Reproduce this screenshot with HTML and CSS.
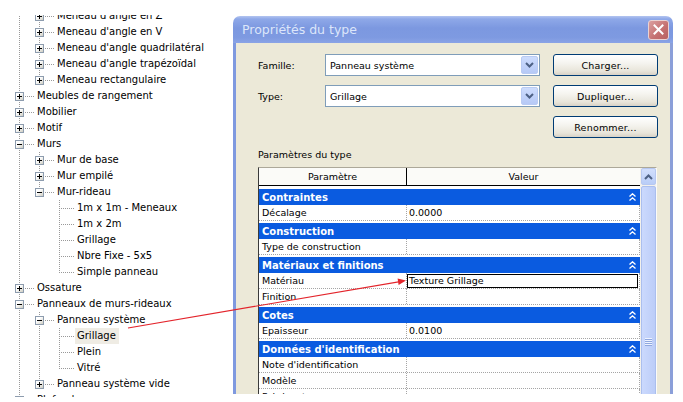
FILE: index.html
```html
<!DOCTYPE html>
<html lang="fr">
<head>
<meta charset="utf-8">
<title>Propriétés du type</title>
<link rel="stylesheet" href="styles.css">
</head>
<body>
<div class="stage">
  <div class="tree-pane">
    <div class="tree">
      <div class="row"><span class="c v"></span><span class="n full"><i class="bx plus"></i></span><span class="t">Meneau d'angle en Z</span></div>
      <div class="row"><span class="c v"></span><span class="n full"><i class="bx plus"></i></span><span class="t">Meneau d'angle en V</span></div>
      <div class="row"><span class="c v"></span><span class="n full"><i class="bx plus"></i></span><span class="t">Meneau d'angle quadrilatéral</span></div>
      <div class="row"><span class="c v"></span><span class="n full"><i class="bx plus"></i></span><span class="t">Meneau d'angle trapézoïdal</span></div>
      <div class="row"><span class="c v"></span><span class="n last"><i class="bx plus"></i></span><span class="t">Meneau rectangulaire</span></div>
      <div class="row"><span class="n full"><i class="bx plus"></i></span><span class="t">Meubles de rangement</span></div>
      <div class="row"><span class="n full"><i class="bx plus"></i></span><span class="t">Mobilier</span></div>
      <div class="row"><span class="n full"><i class="bx plus"></i></span><span class="t">Motif</span></div>
      <div class="row"><span class="n full"><i class="bx minus"></i></span><span class="t">Murs</span></div>
      <div class="row"><span class="c v"></span><span class="n full"><i class="bx plus"></i></span><span class="t">Mur de base</span></div>
      <div class="row"><span class="c v"></span><span class="n full"><i class="bx plus"></i></span><span class="t">Mur empilé</span></div>
      <div class="row"><span class="c v"></span><span class="n last"><i class="bx minus"></i></span><span class="t">Mur-rideau</span></div>
      <div class="row"><span class="c v"></span><span class="c"></span><span class="n full"></span><span class="t">1m x 1m - Meneaux</span></div>
      <div class="row"><span class="c v"></span><span class="c"></span><span class="n full"></span><span class="t">1m x 2m</span></div>
      <div class="row"><span class="c v"></span><span class="c"></span><span class="n full"></span><span class="t">Grillage</span></div>
      <div class="row"><span class="c v"></span><span class="c"></span><span class="n full"></span><span class="t">Nbre Fixe - 5x5</span></div>
      <div class="row"><span class="c v"></span><span class="c"></span><span class="n last"></span><span class="t">Simple panneau</span></div>
      <div class="row"><span class="n full"><i class="bx plus"></i></span><span class="t">Ossature</span></div>
      <div class="row"><span class="n full"><i class="bx minus"></i></span><span class="t">Panneaux de murs-rideaux</span></div>
      <div class="row"><span class="c v"></span><span class="n full"><i class="bx minus"></i></span><span class="t">Panneau système</span></div>
      <div class="row"><span class="c v"></span><span class="c v"></span><span class="n full"></span><span class="t sel">Grillage</span></div>
      <div class="row"><span class="c v"></span><span class="c v"></span><span class="n full"></span><span class="t">Plein</span></div>
      <div class="row"><span class="c v"></span><span class="c v"></span><span class="n last"></span><span class="t">Vitré</span></div>
      <div class="row"><span class="c v"></span><span class="n last"><i class="bx plus"></i></span><span class="t">Panneau système vide</span></div>
      <div class="row"><span class="n full"><i class="bx plus"></i></span><span class="t">Plafonds</span></div>
    </div>
  </div>

  <div class="dialog">
    <div class="titlebar">
      <span class="title">Propriétés du type</span>
      <span class="close"><svg width="11" height="11" viewBox="0 0 11 11"><path d="M1.5 1.5 L9.5 9.5 M9.5 1.5 L1.5 9.5" stroke="#fff" stroke-width="2" stroke-linecap="square"/></svg></span>
    </div>
    <div class="body">
      <div class="form">
        <span class="lbl">Famille:</span>
        <div class="combo"><span>Panneau système</span><span class="drop"><svg width="9" height="6" viewBox="0 0 9 6"><path d="M1 1 L4.5 4.5 L8 1" fill="none" stroke="#4d6185" stroke-width="2"/></svg></span></div>
        <div class="btn">Charger...</div>
        <span class="lbl">Type:</span>
        <div class="combo"><span>Grillage</span><span class="drop"><svg width="9" height="6" viewBox="0 0 9 6"><path d="M1 1 L4.5 4.5 L8 1" fill="none" stroke="#4d6185" stroke-width="2"/></svg></span></div>
        <div class="btn">Dupliquer...</div>
        <div class="btn col3">Renommer...</div>
      </div>
      <div class="section">Paramètres du type</div>
      <div class="table">
        <div class="area">
          <div class="thead"><span class="th th1">Paramètre</span><span class="th">Valeur</span></div>
          <div class="grp first"><span>Contraintes</span><svg class="chev" width="7" height="8" viewBox="0 0 7 8"><path d="M0.5 3.5 L3.5 0.8 L6.5 3.5 M0.5 7.5 L3.5 4.8 L6.5 7.5" fill="none" stroke="#fff" stroke-width="1.3"/></svg></div>
          <div class="dr"><span class="k">Décalage</span><span class="val">0.0000</span></div>
          <div class="grp"><span>Construction</span><svg class="chev" width="7" height="8" viewBox="0 0 7 8"><path d="M0.5 3.5 L3.5 0.8 L6.5 3.5 M0.5 7.5 L3.5 4.8 L6.5 7.5" fill="none" stroke="#fff" stroke-width="1.3"/></svg></div>
          <div class="dr"><span class="k">Type de construction</span><span class="val"></span></div>
          <div class="grp"><span>Matériaux et finitions</span><svg class="chev" width="7" height="8" viewBox="0 0 7 8"><path d="M0.5 3.5 L3.5 0.8 L6.5 3.5 M0.5 7.5 L3.5 4.8 L6.5 7.5" fill="none" stroke="#fff" stroke-width="1.3"/></svg></div>
          <div class="dr"><span class="k">Matériau</span><span class="val edit">Texture Grillage</span></div>
          <div class="dr"><span class="k">Finition</span><span class="val"></span></div>
          <div class="grp"><span>Cotes</span><svg class="chev" width="7" height="8" viewBox="0 0 7 8"><path d="M0.5 3.5 L3.5 0.8 L6.5 3.5 M0.5 7.5 L3.5 4.8 L6.5 7.5" fill="none" stroke="#fff" stroke-width="1.3"/></svg></div>
          <div class="dr"><span class="k">Epaisseur</span><span class="val">0.0100</span></div>
          <div class="grp"><span>Données d'identification</span><svg class="chev" width="7" height="8" viewBox="0 0 7 8"><path d="M0.5 3.5 L3.5 0.8 L6.5 3.5 M0.5 7.5 L3.5 4.8 L6.5 7.5" fill="none" stroke="#fff" stroke-width="1.3"/></svg></div>
          <div class="dr"><span class="k">Note d'identification</span><span class="val"></span></div>
          <div class="dr"><span class="k">Modèle</span><span class="val"></span></div>
          <div class="dr"><span class="k">Fabricant</span><span class="val"></span></div>
        </div>
        <div class="sbar">
          <div class="sup"><svg width="9" height="6" viewBox="0 0 9 6"><path d="M1 5 L4.5 1.5 L8 5" fill="none" stroke="#4d6185" stroke-width="2"/></svg></div>
          <div class="thumb"><div class="grip"></div></div>
        </div>
      </div>
    </div>
  </div>
</div>
<svg class="arrow" width="683" height="402" viewBox="0 0 683 402">
  <line x1="128" y1="328" x2="400" y2="281.6" stroke="#e3242b" stroke-width="1.2"/>
  <polygon points="406,280.5 397.6,278.6 398.6,285" fill="#e3242b"/>
</svg>
</body>
</html>
```
FILE: styles.css
```css
* { box-sizing: border-box; }
html, body { margin: 0; background: #fff; }
body { width: 683px; height: 402px; overflow: hidden; position: relative; }

.stage { display: flex; align-items: flex-start; }

/* ---------- tree ---------- */
.tree-pane { flex: none; width: 233px; height: 382px; margin-top: 15px; overflow: hidden; }
.tree { margin-top: -7px; padding-left: 10px; font: 10px/16px "DejaVu Sans", sans-serif; color: #000; }
.row { display: flex; height: 16px; }
.c, .n { flex: none; height: 16px; }
.c { width: 20px; }
.c.v { background: repeating-linear-gradient(to bottom, #999 0 1px, transparent 1px 2px) 9px 0 / 1px 16px no-repeat; }
.n { width: 25px; display: flex; align-items: flex-start; }
.n.full {
  background:
    repeating-linear-gradient(to right, #999 0 1px, transparent 1px 2px) 9px 8px / 16px 1px no-repeat,
    repeating-linear-gradient(to bottom, #999 0 1px, transparent 1px 2px) 9px 0 / 1px 16px no-repeat;
}
.n.last {
  background:
    repeating-linear-gradient(to right, #999 0 1px, transparent 1px 2px) 9px 8px / 16px 1px no-repeat,
    repeating-linear-gradient(to bottom, #999 0 1px, transparent 1px 2px) 9px 0 / 1px 9px no-repeat;
}
.bx { display: block; width: 9px; height: 9px; margin: 4px 0 0 5px; border: 1px solid #8d9cae; }
.bx.plus {
  background:
    linear-gradient(#000, #000) center / 5px 1px no-repeat,
    linear-gradient(#000, #000) center / 1px 5px no-repeat,
    linear-gradient(135deg, #fff 35%, #cfcdc2);
}
.bx.minus {
  background:
    linear-gradient(#000, #000) center / 5px 1px no-repeat,
    linear-gradient(135deg, #fff 35%, #cfcdc2);
}
.t { white-space: nowrap; padding: 0 3px 0 2px; }
.t.sel { background: #efece4; }

/* ---------- dialog ---------- */
.dialog { flex: none; width: 440px; height: 378px; margin-top: 16px; overflow: hidden; display: flex; flex-direction: column; font: 9.5px "DejaVu Sans", sans-serif; color: #000; }
.titlebar {
  flex: none; height: 27px; border-radius: 7px 7px 0 0;
  background: linear-gradient(#b3c4f0, #8ea8e8 3px, #7c98e0 45%, #7e9ae1 80%, #8ba4e6);
  display: flex; align-items: center; justify-content: space-between; padding: 0 4px 0 9px;
}
.title { color: #dce6fa; font: 12.5px "DejaVu Sans", sans-serif; }
.close {
  width: 21px; height: 20px; border: 1px solid #ead2d2; border-radius: 3px;
  background: linear-gradient(135deg, #dba0a0, #c47070 60%, #b86262);
  display: flex; align-items: center; justify-content: center;
}
.body { flex: 1; background: #ece9d8; border-left: 3px solid #7f99df; border-right: 3px solid #8b9fd9; padding: 11px 0 0 22px; }

.form { display: grid; grid-template-columns: 54px 215px 105px; grid-auto-rows: 22px; column-gap: 13px; row-gap: 9px; align-items: center; }
.combo { height: 22px; border: 1px solid #7f9db9; background: #fff; display: flex; align-items: center; justify-content: space-between; padding: 0 1px 0 4px; }
.drop {
  width: 17px; height: 18px; border: 1px solid #b9cbf3; border-radius: 2px;
  background: linear-gradient(#cddcfd, #b6c9f6);
  display: flex; align-items: center; justify-content: center;
}
.btn {
  height: 22px; border: 1px solid #003c74; border-radius: 3px;
  background: linear-gradient(#ffffff, #f5f4ef 40%, #e8e5da 80%, #d8d2c6);
  display: flex; align-items: center; justify-content: center; letter-spacing: 0.2px;
}
.col3 { grid-column: 3; }
.section { margin-top: 11px; line-height: 12px; }

.table { margin-top: 6px; width: 399px; height: 400px; display: flex; border-top: 1px solid #aca899; border-left: 1px solid #3a3a3a; border-right: 1px solid #fbfbf8; background: #fff; }
.area { width: 381px; flex: none; }
.thead { display: grid; grid-template-columns: 148px 1fr; height: 18px; border-bottom: 1px solid #000; background: #fbfbf8; }
.th { text-align: center; line-height: 17px; }
.th1 { border-right: 1px solid #000; }
.grp {
  height: 16px; margin-top: 2px; background: #0a5be0; color: #fff; font-weight: bold; font-size: 10px;
  display: flex; align-items: center; justify-content: space-between; padding: 0 4px 0 3px;
}
.grp.first { margin-top: 3px; }
.dr { display: grid; grid-template-columns: 148px 1fr; height: 16px; border-bottom: 1px dotted #a5a5a5; border-right: 1px dotted #a5a5a5; }
.k { padding-left: 3px; line-height: 15px; border-right: 1px dotted #a5a5a5; white-space: nowrap; }
.val { padding-left: 2px; line-height: 15px; }
.val.edit { border: 1px solid #000; line-height: 12px; margin: 1px 1px 1px 0; padding-left: 1px; }

.sbar { width: 16px; flex: none; background: #f3f1ec; padding: 0 0 0 1px; }
.sup {
  height: 17px; border: 1px solid #b7c8f1; border-radius: 2px;
  background: linear-gradient(#d2dffd, #b9cdf7);
  display: flex; align-items: center; justify-content: center;
}
.thumb {
  height: 320px; margin-top: 1px; border: 1px solid #abbfee; border-radius: 2px;
  background: linear-gradient(to right, #cbd9fd, #bccdf8);
  padding-top: 151px;
}
.grip { width: 7px; height: 8px; margin: 0 auto; background: repeating-linear-gradient(to bottom, #eef3ff 0 1px, #8fa7df 1px 2px); }

.arrow { position: absolute; left: 0; top: 0; pointer-events: none; }
```
